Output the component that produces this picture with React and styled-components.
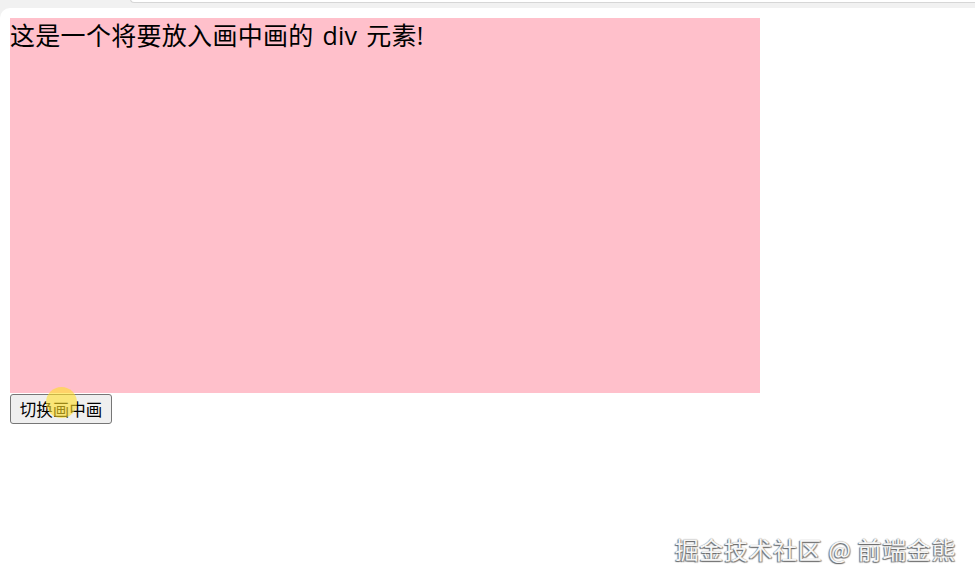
import React from "react";
import styled, { createGlobalStyle } from "styled-components";

const Global = createGlobalStyle`
  html, body { margin: 0; padding: 0; background: #f1f1f1; }
  body { font-family: "Noto Sans CJK SC", "Noto Sans", sans-serif; overflow: hidden; }
`;

const Screen = styled.div`
  position: relative;
  width: 975px;
  height: 582px;
  background: #f1f1f1;
  display: flex;
  flex-direction: column;
  overflow: hidden;
`;

const ChromeStrip = styled.div`
  height: 8px;
  flex: none;
  display: flex;
  padding-left: 130px;
`;

const UrlBarEdge = styled.div`
  flex: 1;
  height: 3px;
  margin-top: -1px;
  background: #ffffff;
  border-bottom: 1px solid #d6d6d6;
  border-left: 1px solid #d6d6d6;
  border-bottom-left-radius: 10px;
`;

const Page = styled.div`
  flex: 1;
  background: #ffffff;
  border-top-left-radius: 10px;
  padding: 10px;
`;

const PipBox = styled.div`
  width: 750px;
  height: 375px;
  background: #ffc0cb;
  color: #000;
  font-size: 25px;
  line-height: 34px;
  letter-spacing: 0.3px;
  word-spacing: 2px;
  font-family: "Open Sans", "Noto Sans CJK SC", sans-serif;
`;

const Button = styled.button`
  display: block;
  width: 102px;
  height: 30px;
  margin-top: 1px;
  padding: 0;
  font-family: "Noto Sans CJK SC", sans-serif;
  font-size: 16.5px;
  color: #000;
  background: #efefef;
  border: 1px solid #767676;
  border-radius: 3px;
`;

const CursorHalo = styled.div`
  position: absolute;
  left: 46px;
  top: 387px;
  width: 31px;
  height: 31px;
  border-radius: 50%;
  background: rgba(255, 222, 40, 0.6);
  pointer-events: none;
`;

const Watermark = styled.div`
  position: absolute;
  right: 19px;
  bottom: 16px;
  font-family: "Noto Sans CJK SC", sans-serif;
  font-size: 24px;
  color: #f6f6f6;
  text-shadow: -1px 1px 1px #6b6b6b, 1px 1px 1px #8a8a8a, 0 0 1px #888;
  white-space: pre;
  letter-spacing: 0.6px;
`;

export default function App() {
  return (
    <>
      <Global />
      <Screen>
        <ChromeStrip>
          <UrlBarEdge />
        </ChromeStrip>
        <Page>
          <PipBox>这是一个将要放入画中画的 div 元素!</PipBox>
          <Button>切换画中画</Button>
        </Page>
        <CursorHalo />
        <Watermark>掘金技术社区 @ 前端金熊</Watermark>
      </Screen>
    </>
  );
}
